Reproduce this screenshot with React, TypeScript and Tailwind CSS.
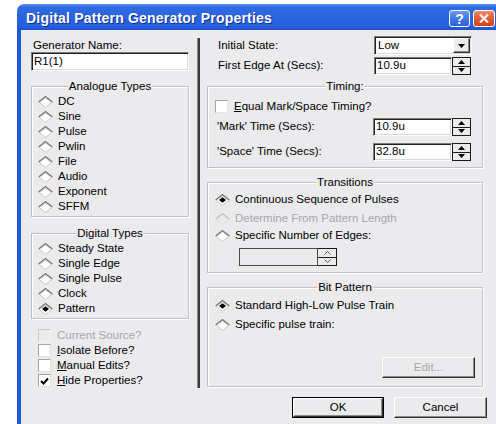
import React from "react";

const FACE = "bg-[#ebebee]";

function Diamond({ on = false, dim = false }: { on?: boolean; dim?: boolean }) {
  return (
    <svg width="15" height="12" viewBox="0 0 15 12" className="shrink-0">
      <polygon points="7.5,0.5 14.5,6 7.5,11.5 0.5,6" fill={dim ? "#ebebee" : "#ffffff"} />
      <polyline points="0.6,6 7.5,0.6 14.4,6" fill="none" stroke={dim ? "#bcbcbc" : "#6f6f6f"} strokeWidth="1.2" />
      <polyline points="2.2,6 7.5,1.9 12.8,6" fill="none" stroke={dim ? "#dcdcdc" : "#b4b4b4"} strokeWidth="0.8" />
      <polyline points="0.6,6 7.5,11.4 14.4,6" fill="none" stroke={dim ? "#dedede" : "#c6c6c6"} strokeWidth="1" />
      {on && <polygon points="7.5,3.2 11,6 7.5,8.8 4,6" fill="#000000" />}
    </svg>
  );
}

function Box({ on = false, dim = false }: { on?: boolean; dim?: boolean }) {
  return (
    <span
      className={`w-[13px] h-[13px] shrink-0 flex items-center justify-center border ${
        dim
          ? "bg-[#ebebee] border-t-[#c8c8c8] border-l-[#c8c8c8] border-r-[#f2f2f2] border-b-[#f2f2f2]"
          : "bg-white border-t-[#a4a4a4] border-l-[#a4a4a4] border-r-[#e4e4e4] border-b-[#e4e4e4]"
      }`}
    >
      {on && (
        <svg width="9" height="8" viewBox="0 0 9 8">
          <polyline points="1,4 3.5,6.5 8,1.5" fill="none" stroke="#000" strokeWidth="2" />
        </svg>
      )}
    </span>
  );
}

function Group({ title, className = "", children }: { title: string; className?: string; children: React.ReactNode }) {
  return (
    <div className={`relative flex flex-col border border-[#c2c2c6] shadow-[inset_1px_1px_0_#ffffff,1px_1px_0_#ffffff] ${className}`}>
      <span className={`absolute left-1/2 -translate-x-1/2 top-[-8px] px-[1px] ${FACE} leading-[14px] whitespace-nowrap`}>{title}</span>
      {children}
    </div>
  );
}

function RadioRow({ label, on = false, dim = false, h = "h-[15px]", className = "" }: { label: string; on?: boolean; dim?: boolean; h?: string; className?: string }) {
  return (
    <div className={`flex items-center gap-[5px] ${h} ${className}`}>
      <Diamond on={on} dim={dim} />
      <span className={`leading-none whitespace-nowrap ${dim ? "text-[#a8a8ac]" : ""}`}>{label}</span>
    </div>
  );
}

function CheckRow({ children, on = false, dim = false, className = "" }: { children: React.ReactNode; on?: boolean; dim?: boolean; className?: string }) {
  return (
    <div className={`flex items-center gap-[6px] h-[15px] ${className}`}>
      <Box on={on} dim={dim} />
      <span className={`leading-none whitespace-nowrap ${dim ? "text-[#a8a8ac]" : ""}`}>{children}</span>
    </div>
  );
}

const SUNKEN =
  "border border-t-[#7c7c7c] border-l-[#7c7c7c] border-r-white border-b-white shadow-[inset_1px_1px_0_#202020,inset_-1px_-1px_0_#d8d8d8]";

const RAISED =
  "border border-t-white border-l-white border-r-[#303030] border-b-[#303030] shadow-[inset_-1px_-1px_0_#8c8c8c]";

function Tri({ down = false, color = "#000" }: { down?: boolean; color?: string }) {
  return (
    <svg width="7" height="4" viewBox="0 0 7 4">
      <polygon points={down ? "0,0 7,0 3.5,4" : "0,4 7,4 3.5,0"} fill={color} />
    </svg>
  );
}

function Chevron({ down = false }: { down?: boolean }) {
  return (
    <svg width="7" height="4" viewBox="0 0 7 4">
      <polyline points={down ? "0.5,0.5 3.5,3.5 6.5,0.5" : "0.5,3.5 3.5,0.5 6.5,3.5"} fill="none" stroke="#5a5a5a" strokeWidth="1" />
    </svg>
  );
}

function Spinner({ value, w }: { value: string; w: string }) {
  return (
    <div className={`flex h-[18px] ${w}`}>
      <div className={`flex-1 bg-white ${SUNKEN} flex items-center pl-[2px] leading-none`}>{value}</div>
      <div className="w-[19px] flex flex-col border border-[#1a1a1a]">
        <div className={`flex-1 flex items-center justify-center ${FACE} border-b border-[#1a1a1a]`}>
          <Tri />
        </div>
        <div className={`flex-1 flex items-center justify-center ${FACE}`}>
          <Tri down />
        </div>
      </div>
    </div>
  );
}

export default function App() {
  return (
    <div className="w-[496px] h-[424px] bg-white overflow-hidden font-['Liberation_Sans',Arial,sans-serif] text-[11.5px] text-black">
      <div className="ml-[17px] mt-[4px] w-[486px] h-[440px] flex flex-col">
        {/* caption */}
        <div className="h-[26px] shrink-0 flex items-start rounded-tl-[7px] rounded-tr-[7px] bg-[linear-gradient(to_bottom,#5d94f0_0%,#2f6be4_12%,#2a64de_50%,#2660da_85%,#1d52cf_100%)] pl-[9px] pr-[8px]">
          <span className="mt-[6px] text-white font-bold text-[14px] leading-[16px] tracking-[0.2px] [text-shadow:1px_1px_0_#12309a] whitespace-nowrap">
            Digital Pattern Generator Properties
          </span>
          <div className="ml-auto mt-[6px] flex gap-[3px]">
            <div className="w-[21px] h-[17px] rounded-[3px] border border-white bg-[linear-gradient(to_bottom,#6a9cf5,#3a74e6_60%,#2f64d8)] flex items-center justify-center text-white font-bold text-[14px] leading-none">
              ?
            </div>
            <div className="w-[22px] h-[17px] rounded-[3px] border border-white bg-[linear-gradient(to_bottom,#ef8a68,#e05a32_55%,#cc4420)] flex items-center justify-center">
              <svg width="10" height="9" viewBox="0 0 10 9">
                <path d="M1 0.5 L9 8.5 M9 0.5 L1 8.5" stroke="#fff" strokeWidth="2" />
              </svg>
            </div>
          </div>
        </div>

        {/* client area */}
        <div className={`flex-1 border-l-[4px] border-[#2158d8] ${FACE} pt-[6px] flex flex-col`}>
          <div className="flex items-start">
            {/* left column */}
            <div className="ml-[10px] mt-[2px] w-[158px] flex flex-col">
              <div className="leading-[14px] ml-[2px]">Generator Name:</div>
              <div className={`h-[19px] bg-white ${SUNKEN} flex items-center pl-[2px] leading-none`}>R1(1)</div>

              <Group title="Analogue Types" className="mt-[15px] pt-[7px] pb-[2px] pl-[6px]">
                <RadioRow label="DC" />
                <RadioRow label="Sine" />
                <RadioRow label="Pulse" />
                <RadioRow label="Pwlin" />
                <RadioRow label="File" />
                <RadioRow label="Audio" />
                <RadioRow label="Exponent" />
                <RadioRow label="SFFM" />
              </Group>

              <Group title="Digital Types" className="mt-[16px] pt-[7px] pb-[2px] pl-[6px]">
                <RadioRow label="Steady State" />
                <RadioRow label="Single Edge" />
                <RadioRow label="Single Pulse" />
                <RadioRow label="Clock" />
                <RadioRow label="Pattern" on />
              </Group>

              <div className="mt-[9px] pl-[7px] flex flex-col">
                <CheckRow dim>Current Source?</CheckRow>
                <CheckRow>
                  <span className="underline">I</span>solate Before?
                </CheckRow>
                <CheckRow>
                  <span className="underline">M</span>anual Edits?
                </CheckRow>
                <CheckRow on>
                  <span className="underline">H</span>ide Properties?
                </CheckRow>
              </div>
            </div>

            {/* divider */}
            <div className="ml-[9px] mt-[2px] w-[2px] h-[350px] bg-[#3c3c3c] shadow-[-1px_0_0_#8a8a8a]" />

            {/* right column */}
            <div className="ml-[7px] w-[276px] flex flex-col">
              <div className="flex items-center h-[19px]">
                <span className="w-[167px] pl-[11px] leading-none">Initial State:</span>
                <div className={`w-[98px] h-[19px] bg-white ${SUNKEN} flex items-center`}>
                  <span className="flex-1 pl-[3px] leading-none">Low</span>
                  <div className={`w-[17px] h-[15px] mr-[1px] ${FACE} ${RAISED} flex items-center justify-center`}>
                    <Tri down />
                  </div>
                </div>
              </div>
              <div className="flex items-center h-[18px] mt-[2px]">
                <span className="w-[167px] pl-[11px] leading-none">First Edge At (Secs):</span>
                <Spinner value="10.9u" w="w-[97px]" />
              </div>

              <Group title="Timing:" className="mt-[11px] pt-[12px] pb-[6px]">
                <CheckRow className="pl-[7px]">
                  <span className="underline">E</span>qual Mark/Space Timing?
                </CheckRow>
                <div className="flex items-center h-[18px] mt-[4px]">
                  <span className="w-[165px] pl-[9px] leading-none">'Mark' Time (Secs):</span>
                  <Spinner value="10.9u" w="w-[98px]" />
                </div>
                <div className="flex items-center h-[18px] mt-[7px]">
                  <span className="w-[165px] pl-[9px] leading-none">'Space' Time (Secs):</span>
                  <Spinner value="32.8u" w="w-[98px]" />
                </div>
              </Group>

              <Group title="Transitions" className="mt-[14px] pt-[8px] pb-[6px] pl-[7px]">
                <RadioRow label="Continuous Sequence of Pulses" on h="h-[17px]" />
                <RadioRow label="Determine From Pattern Length" dim h="h-[17px]" className="mt-[2px]" />
                <RadioRow label="Specific Number of Edges:" h="h-[17px]" />
                <div className="mt-[4px] ml-[24px] flex h-[18px] w-[98px]">
                  <div className={`flex-1 ${FACE} border border-[#4a4a4a]`} />
                  <div className="w-[19px] flex flex-col border border-l-0 border-[#1a1a1a]">
                    <div className={`flex-1 flex items-center justify-center ${FACE} border-b border-[#1a1a1a]`}>
                      <Chevron />
                    </div>
                    <div className={`flex-1 flex items-center justify-center ${FACE}`}>
                      <Chevron down />
                    </div>
                  </div>
                </div>
              </Group>

              <Group title="Bit Pattern" className="mt-[14px] pt-[9px] pb-[8px] pl-[7px]">
                <RadioRow label="Standard High-Low Pulse Train" on h="h-[17px]" />
                <RadioRow label="Specific pulse train:" h="h-[17px]" className="mt-[2px]" />
                <div
                  className={`mt-[24px] self-end mr-[7px] w-[93px] h-[21px] ${RAISED} flex items-center justify-center text-[#a8a8ac] leading-none`}
                >
                  Edit...
                </div>
              </Group>
            </div>
          </div>

          {/* dialog buttons */}
          <div className="mt-[9px] ml-[271px] flex gap-[10px]">
            <div className="w-[92px] h-[21px] border border-black p-0">
              <div className={`w-full h-full ${RAISED} flex items-center justify-center leading-none`}>OK</div>
            </div>
            <div className={`w-[93px] h-[21px] ${RAISED} flex items-center justify-center leading-none`}>Cancel</div>
          </div>
        </div>
      </div>
    </div>
  );
}
